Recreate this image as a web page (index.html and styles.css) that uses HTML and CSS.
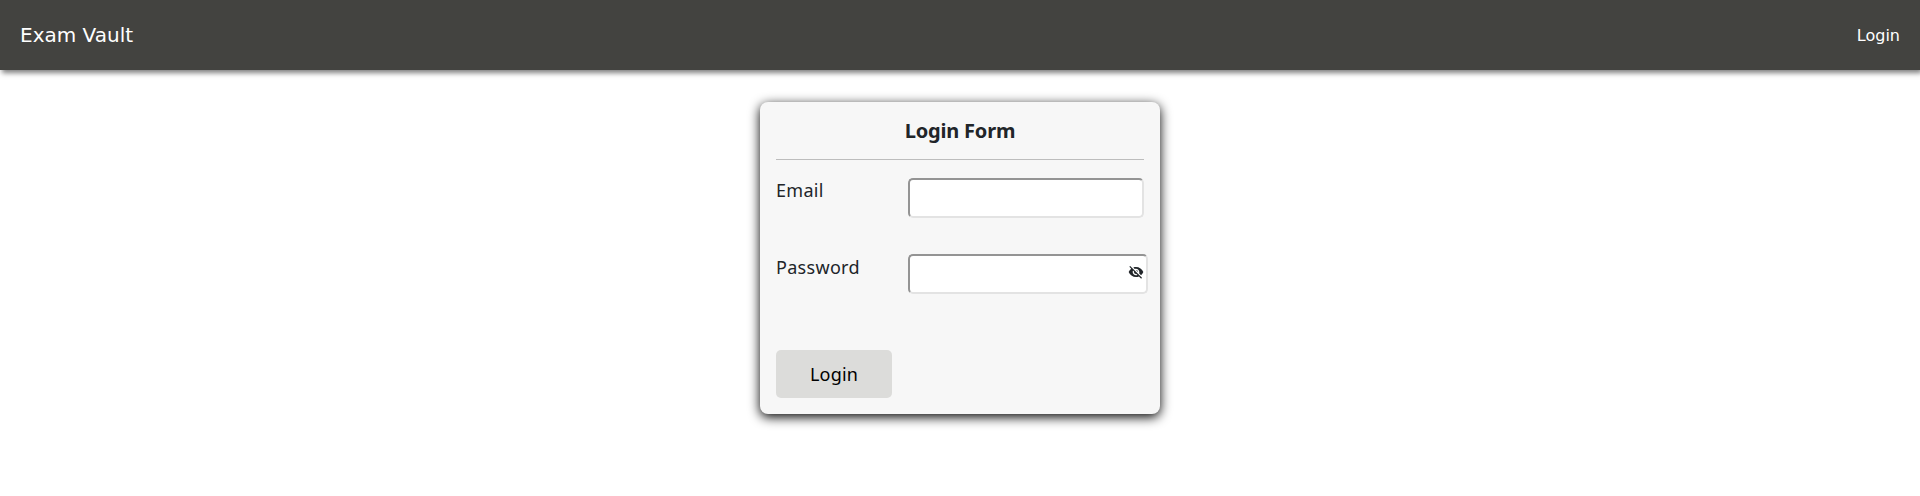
FILE: index.html
```html
<!DOCTYPE html>
<html lang="en">
<head>
<meta charset="utf-8">
<title>Exam Vault</title>
<link rel="stylesheet" href="styles.css">
</head>
<body>
<nav class="navbar">
  <a class="brand">Exam Vault</a>
  <a class="nav-link">Login</a>
</nav>
<main class="page">
  <form class="card">
    <h1 class="title"><span class="title-text">Login Form</span></h1>
    <div class="row">
      <label class="label email" for="email">Email</label>
      <input class="input" id="email" type="email">
    </div>
    <div class="row">
      <label class="label password" for="password">Password</label>
      <div class="field">
        <input class="input wide" id="password" type="password">
        <svg class="eye" viewBox="0 0 24 24" fill="currentColor"><path d="M12 7c2.76 0 5 2.24 5 5 0 .65-.13 1.26-.36 1.83l2.92 2.92c1.51-1.26 2.7-2.89 3.43-4.75-1.73-4.39-6-7.5-11-7.5-1.4 0-2.74.25-3.98.7l2.16 2.16C10.74 7.13 11.35 7 12 7zM2 4.27l2.28 2.28.46.46C3.08 8.3 1.78 10.02 1 12c1.73 4.39 6 7.5 11 7.5 1.55 0 3.03-.3 4.38-.84l.42.42L19.73 22 21 20.73 3.27 3 2 4.27zM7.53 9.8l1.55 1.55c-.05.21-.08.43-.08.65 0 1.66 1.34 3 3 3 .22 0 .44-.03.65-.08l1.55 1.55c-.67.33-1.41.53-2.2.53-2.76 0-5-2.24-5-5 0-.79.2-1.53.53-2.2zm4.31-.78l3.15 3.15.02-.16c0-1.66-1.34-3-3-3l-.17.01z"/></svg>
      </div>
    </div>
    <button class="button" type="button">Login</button>
  </form>
</main>
</body>
</html>
```
FILE: styles.css
```css
* { box-sizing: border-box; }
body {
  margin: 0;
  min-height: 100vh;
  background: #fff;
  color: #212529;
  font-family: "Noto Sans", "Open Sans", sans-serif;
  font-size: 18px;
  line-height: 24px;
}
.navbar {
  display: flex;
  align-items: center;
  justify-content: space-between;
  height: 70px;
  padding: 0 20px;
  background: #434340;
  color: #fff;
  font-family: "DejaVu Sans", sans-serif;
  box-shadow: 2px 3px 5px rgba(0, 0, 0, .5);
}
.brand { font-size: 20px; }
.nav-link {
  padding-top: 2px;
  font-size: 16px;
}
.page {
  display: flex;
  justify-content: center;
  align-items: flex-start;
  min-height: 426px;
  padding-top: 32px;
}
.card {
  width: 400px;
  height: 312px;
  padding: 16px;
  border-radius: 8px;
  background: #f7f7f7;
  box-shadow: 0 3px 12px #000;
}
.title {
  display: flex;
  justify-content: center;
  height: 42px;
  margin: 0 0 18px;
  border-bottom: 1px solid #bdbdbd;
  font-size: 20px;
  font-weight: 700;
  line-height: 26px;
  letter-spacing: -.2px;
}
.row {
  display: flex;
  height: 76px;
}
.label {
  width: 132px;
  flex: none;
}
.email { letter-spacing: .3px; }
.password {
  padding-top: 1px;
  letter-spacing: .3px;
}
.input {
  display: block;
  width: 236px;
  height: 40px;
  border: 2px solid;
  border-color: #949494 #e3e3e3 #e3e3e3 #949494;
  border-radius: 5px;
  background: #fff;
}
.wide { width: 240px; }
.field {
  position: relative;
  height: 40px;
}
.eye {
  position: absolute;
  top: 10px;
  right: 4px;
  width: 16px;
  height: 16px;
}
.button {
  display: block;
  width: 116px;
  height: 48px;
  margin-top: 20px;
  padding: 0;
  border: 0;
  border-radius: 5px;
  background: #dcdcda;
  color: #000;
  font: inherit;
  letter-spacing: .2px;
}
```
